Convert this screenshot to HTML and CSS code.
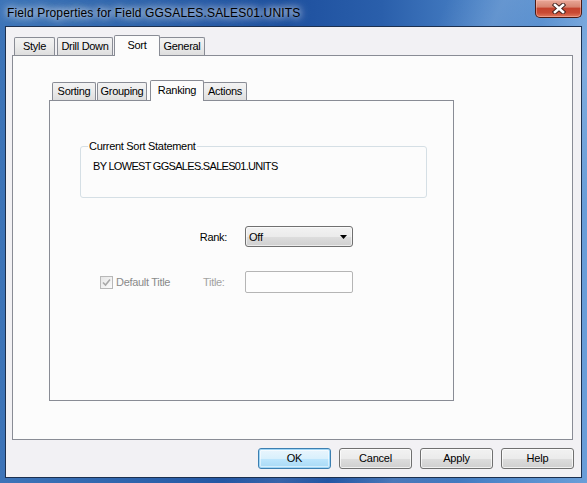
FILE: index.html
```html
<!DOCTYPE html>
<html>
<head>
<meta charset="utf-8">
<link rel="stylesheet" href="styles.css">
</head>
<body>
<div class="window">
  <div class="titlebar">
    <span class="title">Field Properties for Field GGSALES.SALES01.UNITS</span>
    <div class="close">
      <svg width="14" height="11" viewBox="0 0 14 11">
        <path d="M3 2 L11 9 M11 2 L3 9" stroke="#40201c" stroke-width="4.4" stroke-linecap="square" fill="none"/>
        <path d="M3 2 L11 9 M11 2 L3 9" stroke="#ffffff" stroke-width="2.6" stroke-linecap="square" fill="none"/>
      </svg>
    </div>
  </div>
  <div class="client">
    <div class="tabs outer-tabs">
      <div class="tab w-style">Style</div>
      <div class="tab w-drill">Drill Down</div>
      <div class="tab sel w-sort">Sort</div>
      <div class="tab w-general">General</div>
    </div>
    <div class="panel outer-panel">
      <div class="tabs inner-tabs">
        <div class="tab w-sorting">Sorting</div>
        <div class="tab w-grouping">Grouping</div>
        <div class="tab sel w-ranking">Ranking</div>
        <div class="tab w-actions">Actions</div>
      </div>
      <div class="panel inner-panel">
        <div class="group">
          <div class="group-title">Current Sort Statement</div>
          <div class="statement">BY LOWEST GGSALES.SALES01.UNITS</div>
        </div>
        <div class="row rank-row">
          <span class="rank-label">Rank:</span>
          <div class="select">
            <span class="select-text">Off</span>
            <svg class="arrow" width="7" height="4" viewBox="0 0 7 4"><path d="M0 0 H7 L3.5 4 Z" fill="#000"/></svg>
          </div>
        </div>
        <div class="row title-row">
          <div class="check-wrap">
            <span class="check">
              <svg width="9" height="9" viewBox="0 0 9 9"><path d="M1 4.5 L3.5 7 L8 1.5" stroke="#a8a8a8" stroke-width="1.6" fill="none"/></svg>
            </span>
            <span class="disabled">Default Title</span>
          </div>
          <span class="title-label disabled">Title:</span>
          <div class="input"></div>
        </div>
      </div>
    </div>
    <div class="buttons">
      <div class="btn default">OK</div>
      <div class="btn">Cancel</div>
      <div class="btn">Apply</div>
      <div class="btn">Help</div>
    </div>
  </div>
</div>
</body>
</html>
```
FILE: styles.css
```css
html, body {
  margin: 0;
  padding: 0;
}
body {
  width: 587px;
  height: 483px;
  overflow: hidden;
  font-family: "Liberation Sans", Arial, sans-serif;
  font-size: 11px;
  color: #000;
}
.window {
  box-sizing: border-box;
  width: 587px;
  height: 483px;
  padding: 0 5px 5px 5px;
  display: flex;
  flex-direction: column;
  background:
    linear-gradient(115deg, rgba(255,255,255,0) 55%, rgba(255,255,255,0.12) 62%, rgba(255,255,255,0) 68%, rgba(255,255,255,0.14) 76%, rgba(255,255,255,0) 84%),
    linear-gradient(90deg, #3d74b8 0%, #2d62ab 25%, #1d4f9e 48%, #2a5fab 65%, #4a82c6 82%, #6a9ed8 100%);
}
.titlebar {
  height: 26px;
  display: flex;
  justify-content: space-between;
  align-items: flex-start;
}
.title {
  padding-left: 2px;
  margin-top: 6px;
  font-size: 12px;
  line-height: 15px;
  letter-spacing: 0.15px;
  color: #000;
  text-shadow: 0 0 6px rgba(255,255,255,0.9), 0 0 10px rgba(255,255,255,0.7), 0 0 14px rgba(255,255,255,0.5);
}
.close {
  box-sizing: border-box;
  width: 47px;
  height: 18px;
  border: 1px solid #4b1a14;
  border-top: none;
  border-radius: 0 0 5px 5px;
  background: linear-gradient(#e9a898 0%, #d88572 40%, #c4432e 50%, #c94a34 75%, #e07a5e 100%);
  box-shadow: inset 0 0 0 1px rgba(255,200,190,0.45);
  display: flex;
  align-items: center;
  justify-content: center;
}
.client {
  flex: 1;
  display: flex;
  flex-direction: column;
  border: 1px solid #1c304f;
  background: #f2f1f4;
}
.tabs {
  display: flex;
  align-items: flex-end;
  height: 20px;
}
.outer-tabs {
  margin-top: 8px;
  padding-left: 8px;
}
.tab {
  box-sizing: border-box;
  height: 18px;
  border: 1px solid #898c95;
  border-bottom: none;
  border-radius: 2px 2px 0 0;
  background: linear-gradient(#f3f3f3 0%, #ebebeb 50%, #dedede 100%);
  text-align: center;
  line-height: 17px;
  letter-spacing: -0.3px;
  white-space: nowrap;
}
.tab.sel {
  height: 21px;
  margin-bottom: -1px;
  position: relative;
  z-index: 1;
  background: #fcfcfc;
  line-height: 18px;
}
.w-style { width: 41px; margin-right: 2px; }
.w-drill { width: 56px; margin-right: 1px; }
.w-sort { width: 46px; }
.w-general { width: 46px; margin-left: -1px; }
.w-sorting { width: 44px; margin-right: 1px; }
.w-grouping { width: 50px; margin-right: 3px; }
.w-ranking { width: 54px; }
.w-actions { width: 44px; margin-left: -1px; }
.panel {
  box-sizing: border-box;
  border: 1px solid #898c95;
  background: #fcfcfc;
}
.outer-panel {
  height: 385px;
  margin: 0 8px 0 6px;
}
.inner-tabs {
  margin-top: 24px;
  padding-left: 39px;
}
.inner-panel {
  width: 405px;
  height: 301px;
  margin-left: 36px;
  padding-left: 30px;
  padding-top: 45px;
}
.group {
  box-sizing: border-box;
  width: 347px;
  height: 52px;
  border: 1px solid #d5dfe5;
  border-radius: 3px;
}
.group-title {
  display: inline-block;
  margin: -7px 0 0 7px;
  padding: 0 1px;
  background: #fcfcfc;
  line-height: 13px;
  letter-spacing: -0.3px;
  vertical-align: top;
}
.statement {
  margin: 1px 0 0 12px;
  line-height: 13px;
  letter-spacing: -0.7px;
}
.row {
  display: flex;
  align-items: center;
}
.rank-row {
  margin-top: 28px;
  margin-left: -30px;
}
.rank-label {
  width: 177px;
  margin-right: 18px;
  text-align: right;
  letter-spacing: -0.3px;
}
.select {
  box-sizing: border-box;
  width: 108px;
  height: 21px;
  border: 1px solid #707070;
  border-radius: 3px;
  background: linear-gradient(#f2f2f2 0%, #ebebeb 50%, #dddddd 51%, #cfcfcf 100%);
  box-shadow: inset 0 0 0 1px rgba(255,255,255,0.6);
  display: flex;
  align-items: center;
  justify-content: space-between;
  padding: 0 5px 0 3px;
}
.select-text {
  letter-spacing: -0.2px;
}
.title-row {
  margin-top: 24px;
  margin-left: 20px;
}
.check-wrap {
  width: 103px;
  display: flex;
  align-items: center;
}
.check {
  box-sizing: border-box;
  width: 13px;
  height: 13px;
  border: 1px solid #b8b8b8;
  background: linear-gradient(135deg, #e6e6e6, #fbfbfb);
  display: flex;
  align-items: center;
  justify-content: center;
  margin-right: 3px;
}
.disabled {
  color: #8a8a8a;
  letter-spacing: -0.3px;
}
.title-label {
  width: 42px;
  color: #a2a2a2;
}
.input {
  box-sizing: border-box;
  width: 108px;
  height: 22px;
  border: 1px solid #b5b5b5;
  border-radius: 2px;
  background: #fdfdfd;
}
.buttons {
  display: flex;
  justify-content: flex-end;
  gap: 8px;
  margin-top: 8px;
  padding-right: 7px;
}
.btn {
  box-sizing: border-box;
  width: 73px;
  height: 21px;
  border: 1px solid #707070;
  border-radius: 3px;
  background: linear-gradient(#f2f2f2 0%, #ebebeb 50%, #dddddd 51%, #cfcfcf 100%);
  box-shadow: inset 0 0 0 1px rgba(255,255,255,0.7);
  text-align: center;
  line-height: 19px;
  letter-spacing: -0.2px;
}
.btn.default {
  border-color: #3c7fb1;
  background: linear-gradient(#eaf6fd 0%, #d9f0fc 50%, #bee6fd 51%, #a7d9f5 100%);
  box-shadow: inset 0 0 0 1px #9fd5f5, inset 0 0 0 2px rgba(255,255,255,0.5);
}
```
